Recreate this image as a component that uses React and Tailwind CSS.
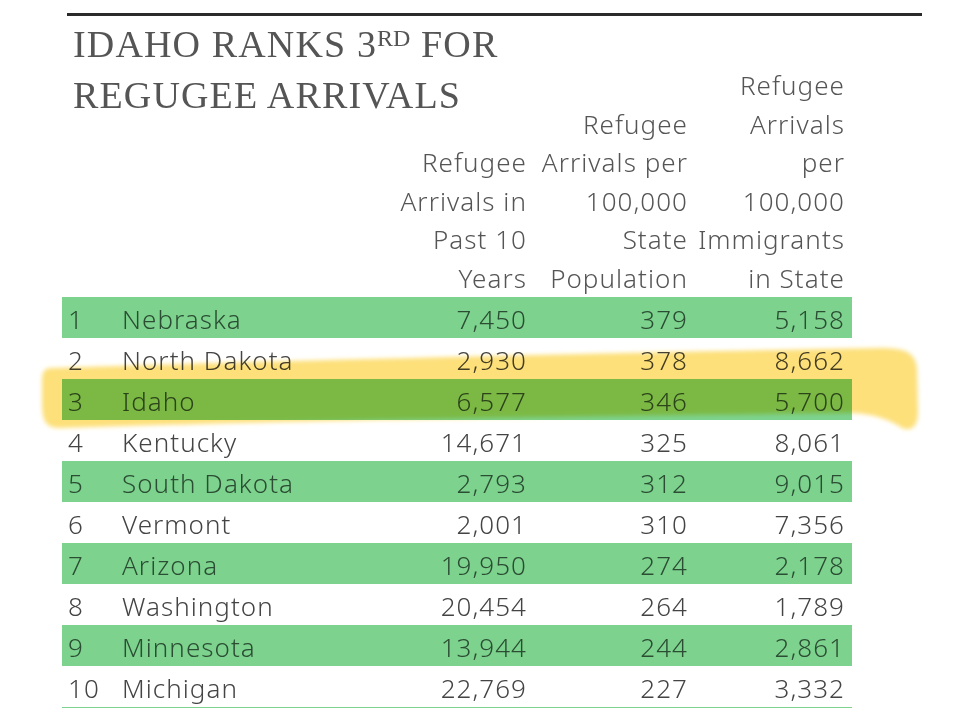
import React from 'react';

const rows = [
  ['1', 'Nebraska', '7,450', '379', '5,158'],
  ['2', 'North Dakota', '2,930', '378', '8,662'],
  ['3', 'Idaho', '6,577', '346', '5,700'],
  ['4', 'Kentucky', '14,671', '325', '8,061'],
  ['5', 'South Dakota', '2,793', '312', '9,015'],
  ['6', 'Vermont', '2,001', '310', '7,356'],
  ['7', 'Arizona', '19,950', '274', '2,178'],
  ['8', 'Washington', '20,454', '264', '1,789'],
  ['9', 'Minnesota', '13,944', '244', '2,861'],
  ['10', 'Michigan', '22,769', '227', '3,332'],
];

const grid = 'grid grid-cols-[54px_240px_165px_161px_157px] pl-[6px] pr-[7px]';

function Row({ cells, index }) {
  const green = index % 2 === 0;
  const bg = green ? 'bg-[#7dd38e]' : 'bg-white';
  const color = green ? 'text-[#2b4d33]' : 'text-[#444444]';
  return (
    <div className={`${grid} ${bg} ${color} h-[41px] items-center pt-[2px]`}>
      <span>{cells[0]}</span>
      <span>{cells[1]}</span>
      <span className="text-right">{cells[2]}</span>
      <span className="text-right">{cells[3]}</span>
      <span className="text-right">{cells[4]}</span>
    </div>
  );
}

export default function App() {
  return (
    <div className="relative w-[976px] h-[708px] overflow-hidden bg-white">
      {/* top rule */}
      <div className="ml-[67px] w-[855px] mt-[13px] h-[3px] bg-[#2a2a2a]" />

      <div
        className="ml-[62px] w-[790px] text-[26px] font-light tracking-[0.04em]"
        style={{ fontFamily: '"Noto Sans", "Open Sans", sans-serif' }}
      >
        {/* header */}
        <div className={`${grid} h-[278px] items-end mt-[3px] leading-[38.5px] text-[#555555]`}>
          <h1
            className="row-start-1 col-start-1 col-span-2 self-start pl-[5px] whitespace-nowrap text-[38px] leading-[51px] tracking-[0.03em] font-normal text-[#555555]"
            style={{ fontFamily: '"Liberation Serif", "Times New Roman", serif' }}
          >
            IDAHO RANKS 3<span className="text-[24px] align-[0.45em] leading-none tracking-normal">RD</span> FOR
            <br />
            REGUGEE ARRIVALS
          </h1>
          <div className="row-start-1 col-start-3 text-right">
            Refugee<br />Arrivals in<br />Past 10<br />Years
          </div>
          <div className="row-start-1 col-start-4 text-right whitespace-nowrap">
            Refugee<br />Arrivals per<br />100,000<br />State<br />Population
          </div>
          <div className="row-start-1 col-start-5 text-right whitespace-nowrap">
            Refugee<br />Arrivals<br />per<br />100,000<br />Immigrants<br />in State
          </div>
        </div>

        {/* body */}
        <div className="leading-[36px]">
          {rows.map((r, i) => (
            <Row key={r[0]} cells={r} index={i} />
          ))}
          <div className="h-[41px] bg-[#7dd38e]" />
        </div>
      </div>

      {/* highlighter stroke */}
      <svg
        className="absolute inset-0 pointer-events-none mix-blend-multiply"
        width="976"
        height="708"
        viewBox="0 0 976 708"
      >
        <defs>
          <filter id="soft" x="-5%" y="-30%" width="110%" height="160%">
            <feGaussianBlur stdDeviation="2" />
          </filter>
        </defs>
        <path
          d="M52 368 C 250 361, 600 353, 880 348 C 905 348, 915 352, 917 368 L 918 412 C 918 426, 912 432, 902 428 C 890 420, 875 414, 852 413 C 600 416, 300 420, 60 428 C 45 428, 42 420, 42 402 L 42 380 C 42 370, 46 368, 52 368 Z"
          fill="#fde07a"
          filter="url(#soft)"
        />
      </svg>
    </div>
  );
}
